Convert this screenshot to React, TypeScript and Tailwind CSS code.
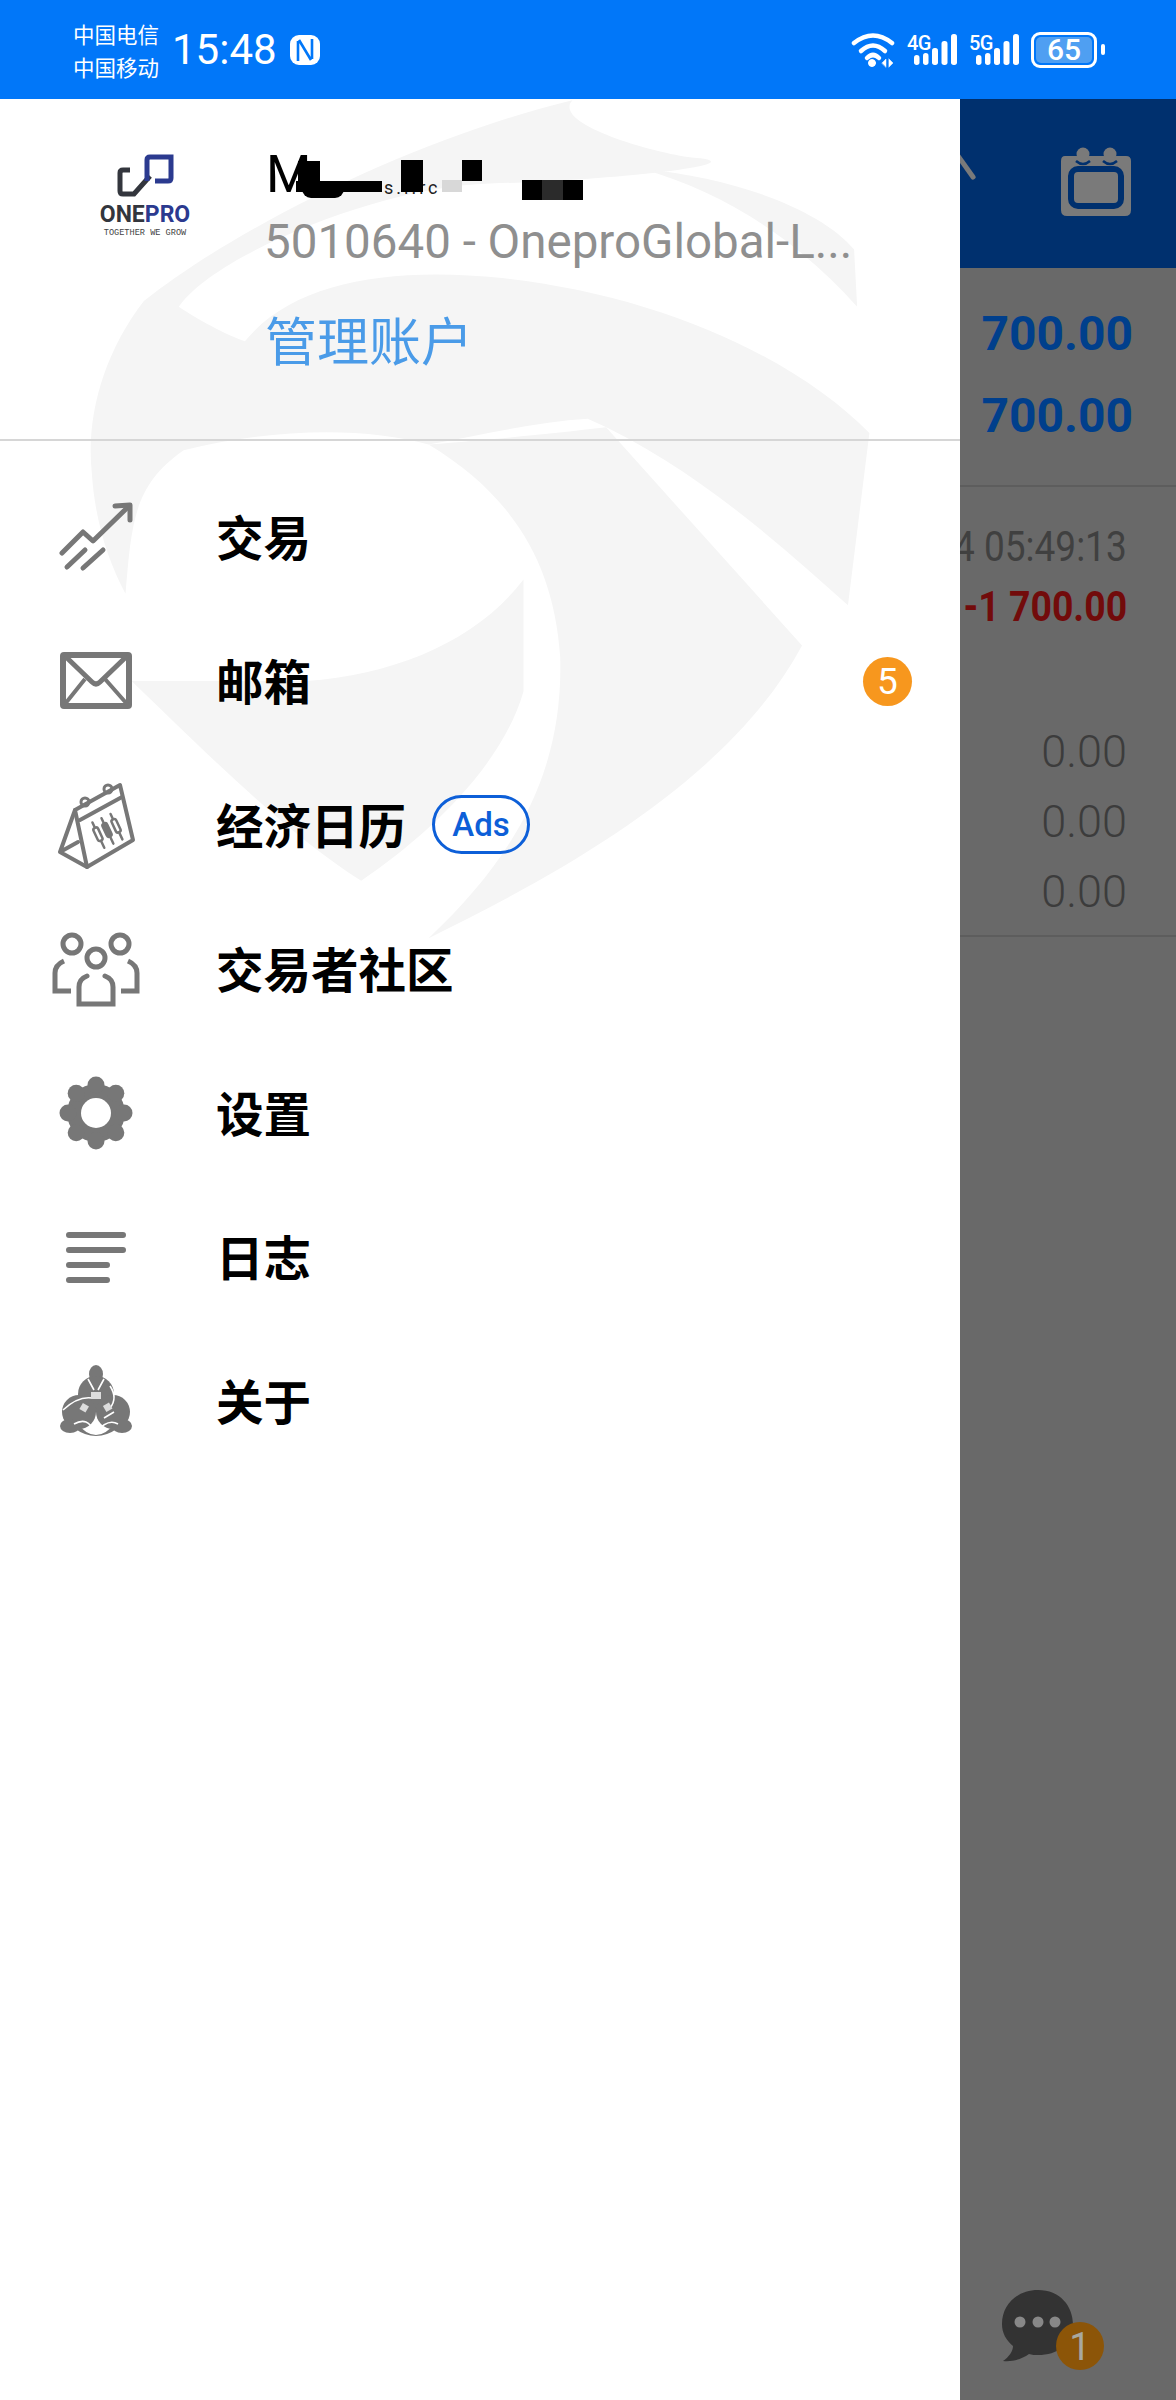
const gray = "#777777";

function Watermark() {
  return (
    <svg className="absolute left-0 top-[-39px] w-[960px] h-[900px]" viewBox="0 0 1568 1568" preserveAspectRatio="none" fill="#f5f5f5">
      <path d="M935 70 C700 130 400 280 235 420 C170 510 140 620 150 720 C155 800 175 870 205 930 C215 800 220 740 300 680 C450 640 600 640 700 670 C800 650 880 630 960 625 C1120 700 1260 830 1385 950 L1420 650 C1300 520 1080 410 820 380 C640 360 480 385 400 490 C370 480 320 450 292 430 C350 340 620 220 800 215 C1000 210 1250 180 1130 170 C1060 160 900 110 935 70 Z" />
      <path d="M1050 190 C1200 205 1340 260 1395 330 L1400 430 C1300 310 1180 230 1050 190 Z" />
      <path d="M215 1082 L500 1082 C650 1070 780 1010 855 905 L855 1100 C820 1230 700 1350 590 1430 C470 1350 330 1200 215 1082 Z" />
      <path d="M990 640 L1310 1020 C1200 1240 950 1400 700 1530 C850 1380 920 1230 915 1040 C905 880 840 760 700 670 C820 660 910 650 990 640 Z" />
    </svg>
  );
}

function Logo() {
  return (
    <div className="flex flex-col items-center w-[90px]">
      <svg width="60" height="44" viewBox="114 154 60 44" fill="none" strokeWidth="5">
        <path d="M129 170 H122 Q119 170 119 173 V191 Q119 194 122 194 H133 L149 176" stroke="#33363d" />
        <path d="M146 181 V160 Q146 157 149 157 H170 V178 Q170 181 167 181 H154" stroke="#2b3a8f" />
      </svg>
      <div className="mt-[7px] text-[23px] leading-[20px] font-bold [font-family:Roboto,sans-serif] text-[#33363d] whitespace-nowrap">
        ONE<span className="text-[#2b3a8f]">PRO</span>
      </div>
      <div className="mt-[3px] text-[8.6px] leading-[10px] [font-family:'Liberation_Mono',monospace] text-[#444] whitespace-nowrap">TOGETHER WE GROW</div>
    </div>
  );
}

function Trade() {
  return (
    <svg width="96" height="96" viewBox="0 0 96 96" fill="none" stroke={gray} strokeWidth="5" strokeLinecap="round" strokeLinejoin="round">
      <path d="M14 65 L35 44 L45 53 L80 19" />
      <path d="M67 18 L82 17 L82 32" />
      <path d="M19 79 L37 62 M35 80 L55 62" />
    </svg>
  );
}
function Mail() {
  return (
    <svg width="96" height="96" viewBox="0 0 96 96" fill="none" stroke={gray} strokeLinejoin="round">
      <rect x="15" y="23" width="66" height="51" rx="1" strokeWidth="6" />
      <path d="M17 24 L44 50 Q48 54 52 50 L79 24" strokeWidth="5" />
      <path d="M17 72 L37 47 M79 72 L57 47" strokeWidth="4" />
    </svg>
  );
}
function Cal() {
  return (
    <svg width="96" height="96" viewBox="0 0 96 96" fill="none" stroke={gray} strokeWidth="4" strokeLinejoin="round" strokeLinecap="round">
      <g transform="translate(0 1)">
        <path d="M27 33 L72 8 L85 63 L39 90 Z" />
        <path d="M27 33 L12 75 L39 90 M12 75 L30 65" />
        <path d="M32 43 L74 20" />
        <circle cx="37" cy="25" r="4" strokeWidth="3" />
        <circle cx="60" cy="12" r="4" strokeWidth="3" />
        <g transform="rotate(-25 59 53)">
          <path d="M49 40 V68 M59 40 V68 M69 40 V68" strokeWidth="2.5" />
          <rect x="46.5" y="46" width="5" height="14" rx="2" strokeWidth="2.5" fill="#fff" />
          <rect x="56.5" y="46" width="5" height="14" rx="2" strokeWidth="2.5" fill={gray} />
          <rect x="66.5" y="46" width="5" height="14" rx="2" strokeWidth="2.5" fill="#fff" />
        </g>
      </g>
    </svg>
  );
}
function People() {
  return (
    <svg width="96" height="96" viewBox="0 0 96 96" fill="none" stroke={gray} strokeWidth="5" strokeLinecap="round">
      <g transform="translate(0 1)">
        <circle cx="24" cy="23" r="9" />
        <circle cx="72" cy="23" r="9" />
        <circle cx="48" cy="37" r="9" />
        <path d="M16 40 Q7 44 7 52 V70 H23" strokeLinecap="butt" />
        <path d="M80 40 Q89 44 89 52 V70 H73" strokeLinecap="butt" />
        <path d="M39 55 Q31 58 31 66 V83 H65 V66 Q65 58 57 55" />
      </g>
    </svg>
  );
}
function Gear() {
  const angles = [0, 45, 90, 135, 180, 225, 270, 315];
  return (
    <svg width="96" height="96" viewBox="0 0 96 96" fill={gray}>
      <circle cx="48" cy="49" r="29" />
      {angles.map((a) => (
        <circle key={a} cx={48 + 28 * Math.cos((a * Math.PI) / 180)} cy={49 + 28 * Math.sin((a * Math.PI) / 180)} r="8.5" />
      ))}
      <circle cx="48" cy="49" r="15" fill="#ffffff" />
    </svg>
  );
}
function Lines() {
  return (
    <svg width="96" height="96" viewBox="0 0 96 96" stroke={gray} strokeWidth="6" strokeLinecap="round">
      <path d="M21 27 H75 M21 42 H75 M21 57 H59 M21 72 H59" />
    </svg>
  );
}
function Monks() {
  return (
    <svg width="96" height="96" viewBox="0 0 96 96" fill={gray}>
      <ellipse cx="48" cy="22" rx="7" ry="9" />
      <circle cx="48" cy="42" r="18" />
      <circle cx="31" cy="60" r="17" />
      <circle cx="65" cy="60" r="17" />
      <ellipse cx="22" cy="74" rx="10" ry="7" />
      <ellipse cx="74" cy="74" rx="10" ry="7" />
      <path d="M28 70 Q48 96 68 70 L70 76 Q48 92 26 76 Z" />
      <g fill="none" stroke="#ffffff" strokeWidth="1.6">
        <path d="M40 27 L46 38 M56 27 L50 38" />
        <path d="M62 34 Q70 46 62 56" />
        <path d="M15 58 Q30 44 44 46" />
        <path d="M26 72 Q40 64 46 80 M70 72 Q60 66 48 80" />
        <path d="M56 66 L66 60" />
      </g>
      <rect x="43" y="40" width="10" height="7" fill="#dddddd" />
      <rect x="33" y="52" width="7" height="7" fill="#dddddd" transform="rotate(30 36 55)" />
      <rect x="56" y="52" width="7" height="7" fill="#dddddd" transform="rotate(-30 59 55)" />
    </svg>
  );
}

const rows = [
  { label: "交易", icon: <Trade /> },
  { label: "邮箱", icon: <Mail />, badge: "5" },
  { label: "经济日历", icon: <Cal />, ads: true },
  { label: "交易者社区", icon: <People /> },
  { label: "设置", icon: <Gear /> },
  { label: "日志", icon: <Lines /> },
  { label: "关于", icon: <Monks /> },
];

function Signal({ label }: { label: string }) {
  return (
    <div className="relative w-[51px] h-[34px]">
      <span className="absolute left-0 top-0 text-[20px] leading-[20px] font-medium tracking-[-0.5px] [font-family:Roboto,sans-serif]">{label}</span>
      <svg width="51" height="34" viewBox="0 0 51 34" fill="#fff">
        <rect x="7" y="22" width="5.5" height="10" rx="2.7" />
        <rect x="16" y="20" width="5.5" height="12" rx="2.7" />
        <rect x="25" y="15" width="6" height="17" rx="2.7" />
        <rect x="34.5" y="8" width="6" height="24" rx="2.7" />
        <rect x="44" y="1" width="6" height="31" rx="2.7" />
      </svg>
    </div>
  );
}

function StatusBar() {
  return (
    <div className="h-[99px] bg-[#0177f9] flex items-center text-white shrink-0">
      <div className="ml-[73px] flex flex-col text-[21.5px] leading-[33px] [font-family:'Noto_Sans_CJK_SC',sans-serif] whitespace-nowrap">
        <span>中国电信</span>
        <span>中国移动</span>
      </div>
      <span className="ml-[13px] text-[42px] leading-none [font-family:Roboto,sans-serif]">15:48</span>
      <svg className="ml-[12px]" width="32" height="32" viewBox="0 0 32 32">
        <rect x="1" y="1" width="30" height="30" rx="9" fill="#fff" />
        <path d="M9 27 V7 M23 5 V25 M10 6 L22 26" fill="none" stroke="#0177f9" strokeWidth="2.6" />
      </svg>
      <div className="ml-auto mr-[71px] flex items-center">
        <svg width="46" height="36" viewBox="0 0 46 36" fill="none" stroke="#fff" strokeWidth="4.5" strokeLinecap="round">
          <path d="M3 11 Q22 -4 41 11" />
          <path d="M10 19 Q22 8 34 19" />
          <path d="M16 26 Q22 20 28 26" />
          <circle cx="21" cy="31" r="3.5" fill="#fff" strokeWidth="1" />
          <path d="M31 31 L35 27 V35 Z M38 27 L42 31 L38 35 Z" fill="#fff" strokeWidth="0.5" />
        </svg>
        <div className="ml-[10px]"><Signal label="4G" /></div>
        <div className="ml-[11px]"><Signal label="5G" /></div>
        <div className="ml-[11px] w-[66px] h-[36px] border-[3px] border-white rounded-[9px] p-[2px]">
          <div className="w-full h-full bg-[#4f9ff2] rounded-[5px] flex items-center justify-center text-[30px] leading-none font-medium [font-family:Roboto,sans-serif]">65</div>
        </div>
        <div className="ml-[4px] w-[4px] h-[11px] bg-white rounded-full" />
      </div>
    </div>
  );
}

function Drawer() {
  return (
    <div className="w-[960px] relative overflow-hidden bg-white">
      <Watermark />
      <div className="relative">
        <div className="h-[342px] flex border-b-2 border-[#d6d6d6]">
          <div className="ml-[100px] mt-[55px]"><Logo /></div>
          <div className="ml-[76px] mt-[46px] flex flex-col items-start">
            <div className="relative w-[320px] h-[60px] text-[52px] leading-[60px] text-black [font-family:Roboto,sans-serif] whitespace-nowrap">
              M
              <span className="absolute left-[118px] top-[34px] text-[#222] text-[18px] leading-[18px] tracking-[3px]">s.l.rc</span>
              <span className="absolute left-[32px] top-[16px] w-[22px] h-[22px] bg-black" />
              <span className="absolute left-[30px] top-[36px] w-[86px] h-[11px] bg-black" />
              <span className="absolute left-[36px] top-[44px] w-[42px] h-[9px] bg-black rounded-b-full" />
              <span className="absolute left-[135px] top-[15px] w-[22px] h-[32px] bg-black" />
              <span className="absolute left-[196px] top-[15px] w-[20px] h-[21px] bg-black" />
              <span className="absolute left-[176px] top-[35px] w-[20px] h-[12px] bg-[#d8d8d8]" />
              <span className="absolute left-[256px] top-[35px] w-[61px] h-[20px] bg-black" />
              <span className="absolute left-[276px] top-[35px] w-[21px] h-[20px] bg-[#2b2b2b]" />
            </div>
            <div className="mt-[7px] w-[600px] -ml-[2px] text-[47.5px] leading-[60px] text-[#8f8f8f] [font-family:Roboto,sans-serif] whitespace-nowrap">5010640 - OneproGlobal-L...</div>
            <div className="mt-[32px] -ml-[1px] text-[52px] leading-[70px] text-[#4a9be8] [font-family:'Noto_Sans_CJK_SC',sans-serif]">管理账户</div>
          </div>
        </div>
        <div className="pt-[23px] flex flex-col">
          {rows.map((r) => (
            <div key={r.label} className="h-[144px] flex items-center">
              <div className="ml-[48px] w-[96px] h-[96px] shrink-0">{r.icon}</div>
              <span className="ml-[72px] text-[47.5px] leading-none font-bold text-black [font-family:'Noto_Sans_CJK_SC',sans-serif]">{r.label}</span>
              {r.ads && (
                <span className="ml-[26px] w-[98px] h-[59px] border-[3px] border-[#0d5fd8] rounded-full flex items-center justify-center text-[33px] leading-none font-medium text-[#0d5fd8] [font-family:Roboto,sans-serif]">Ads</span>
              )}
              {r.badge && (
                <span className="ml-auto mr-[48px] mt-[2px] w-[49px] h-[49px] rounded-full bg-[#f7971e] text-white flex items-center justify-center text-[37px] leading-none [font-family:Roboto,sans-serif]">{r.badge}</span>
              )}
            </div>
          ))}
        </div>
      </div>
    </div>
  );
}

function Panel() {
  return (
    <div className="flex-1 min-w-0 relative overflow-hidden bg-[#696969] [font-family:Roboto,sans-serif]">
      <div className="h-[169px] bg-[#00306e] relative flex items-center justify-end pr-[44px]">
        <svg className="absolute left-0 top-[55px]" width="16" height="26" viewBox="0 0 16 26">
          <path d="M-2 2 L13 23" stroke="#7a7a7a" strokeWidth="5" strokeLinecap="round" />
        </svg>
        <svg className="mb-[3px]" width="72" height="70" viewBox="0 0 72 70">
          <path d="M5 9 H66 Q71 9 71 14 V63 Q71 69 65 69 H7 Q1 69 1 63 V14 Q1 9 5 9 Z" fill="#7a7a7a" />
          <circle cx="23" cy="7" r="6.5" fill="#7a7a7a" />
          <circle cx="50" cy="7" r="6.5" fill="#7a7a7a" />
          <path d="M16 14 Q23 20 30 14 M43 14 Q50 20 57 14" stroke="#00306e" strokeWidth="2.5" fill="none" />
          <rect x="11" y="22" width="50" height="37" rx="7" fill="#7a7a7a" stroke="#00306e" strokeWidth="6" />
        </svg>
      </div>
      <div className="h-[219px] pt-[25px] pr-[43px] border-b-2 border-[#5d5d5d] flex flex-col items-end text-[48px] leading-[82px] font-bold text-[#003f8c]">
        <span>700.00</span>
        <span>700.00</span>
      </div>
      <div className="h-[450px] pt-[29px] pr-[49px] border-b-2 border-[#5d5d5d] flex flex-col items-end">
        <span className="text-[43px] leading-[60px] text-[#404040] whitespace-nowrap origin-right scale-x-[0.86]">4 05:49:13</span>
        <span className="text-[43px] leading-[60px] font-bold text-[#720b0b] whitespace-nowrap origin-right scale-x-[0.87]">-1 700.00</span>
        <div className="mt-[81px] flex flex-col items-end text-[45px] leading-[70px] font-light text-[#3c3c3c]">
          <span>0.00</span>
          <span>0.00</span>
          <span>0.00</span>
        </div>
      </div>
      <svg className="absolute left-[42px] top-[2190px]" width="102" height="82" viewBox="0 0 102 82">
        <path d="M36 1 C58 1 71 17 71 36 C71 56 55 66 36 66 C33 66 30 66 27 65 C20 70 11 73 1 72 C7 68 11 62 11 57 C4 51 0 44 0 35 C0 16 15 1 36 1 Z" fill="#333333" />
        <circle cx="18" cy="33" r="5.5" fill="#888888" />
        <circle cx="36" cy="33" r="5.5" fill="#888888" />
        <circle cx="53" cy="33" r="5.5" fill="#888888" />
        <circle cx="78" cy="57" r="24" fill="#8c5508" />
        <text x="78" y="71" textAnchor="middle" fontSize="38" fill="#a8a8a0" fontFamily="Roboto, sans-serif">1</text>
      </svg>
    </div>
  );
}

export default function App() {
  return (
    <div className="w-[1176px] h-[2400px] flex flex-col overflow-hidden bg-white">
      <StatusBar />
      <div className="flex flex-1 min-h-0">
        <Drawer />
        <Panel />
      </div>
    </div>
  );
}
